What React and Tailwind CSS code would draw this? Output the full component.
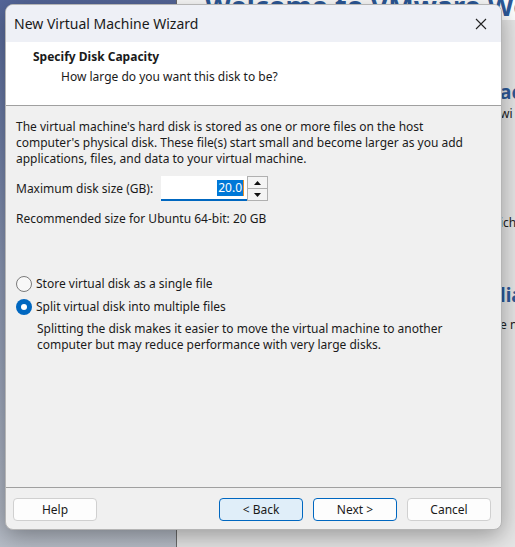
import React from "react";

const font = { fontFamily: '"Noto Sans", "Open Sans", sans-serif' };

function Radio({ checked, label }) {
  return (
    <div className="flex items-center gap-[4px] h-[23px]">
      {checked ? (
        <span className="w-[16px] h-[16px] rounded-full bg-[#0067c0] flex items-center justify-center">
          <span className="w-[6px] h-[6px] rounded-full bg-white" />
        </span>
      ) : (
        <span className="w-[16px] h-[16px] rounded-full border border-[#7a7a7a] bg-[#f8f8f8]" />
      )}
      <span>{label}</span>
    </div>
  );
}

function Button({ children, variant }) {
  const cls =
    variant === "hover"
      ? "bg-[#e0eef9] border-[#0067c0]"
      : variant === "default"
      ? "bg-[#fdfdfd] border-[#0067c0]"
      : "bg-[#fdfdfd] border-[#d0d0d0]";
  return (
    <button className={`w-[84px] h-[23px] rounded-[4px] border text-[12px] text-[#1a1a1a] flex items-center justify-center ${cls}`}>
      {children}
    </button>
  );
}

export default function App() {
  return (
    <div className="relative w-[515px] h-[547px] overflow-hidden flex" style={font}>
      {/* background: VMware library sidebar */}
      <div className="w-[176px] h-full bg-gradient-to-b from-[#55679a] via-[#8c98b4] to-[#b7bdc7]" />
      <div className="w-px h-full bg-[#6a6a6a]" />
      {/* background: VMware home page */}
      <div className="flex-1 h-full bg-[#dcdcdc] flex flex-col overflow-hidden">
        <div className="h-[20px] bg-white overflow-hidden">
          <div className="mt-[-8px] ml-[28px] text-[27px] leading-none font-bold text-[#2d5a99] whitespace-nowrap">
            Welcome to VMware Workstation
          </div>
        </div>
        <div className="flex-1 bg-[#e6e6e6] pl-[323px] text-[12px] text-[#222] whitespace-nowrap">
          <div className="mt-[60px] text-[19px] font-bold text-[#2d5a99] leading-[24px]">ac</div>
          <div className="mt-[2px] leading-[16px]">wi</div>
          <div className="mt-[93px] leading-[16px]">ich</div>
          <div className="mt-[52px] text-[19px] font-bold text-[#2d5a99] leading-[24px]">lia</div>
          <div className="mt-[10px] leading-[16px]">e n</div>
        </div>
      </div>

      {/* dialog window */}
      <div className="absolute left-[5px] top-[4px] w-[497px] h-[526px] rounded-[8px] border border-[#b5b5b5] bg-[#f0f0f0] shadow-[0_6px_24px_rgba(0,0,0,0.35)] overflow-hidden flex flex-col text-[12px] text-[#1a1a1a]">
        <div className="h-[37px] bg-[#eef0f6] flex items-center justify-between pl-[8px] pr-[14px]">
          <span className="text-[14px] text-[#1a1a1a]">New Virtual Machine Wizard</span>
          <svg width="12" height="12" viewBox="0 0 12 12">
            <path d="M1 1 L11 11 M11 1 L1 11" stroke="#222" strokeWidth="1.1" />
          </svg>
        </div>
        <div className="h-[64px] bg-white border-b border-[#a0a0a0] pl-[27px] pt-[7px]">
          <div className="font-bold leading-[16px]">Specify Disk Capacity</div>
          <div className="pl-[28px] mt-[4px] leading-[16px]">How large do you want this disk to be?</div>
        </div>
        <div className="flex-1 px-[10px] pt-[13px] leading-[16px]">
          <p>
            The virtual machine's hard disk is stored as one or more files on the host
            <br />
            computer's physical disk. These file(s) start small and become larger as you add
            <br />
            applications, files, and data to your virtual machine.
          </p>
          <div className="flex items-center mt-[9px]">
            <span className="w-[145px]">Maximum disk size (GB):</span>
            <div className="w-[86px] h-[25px] bg-white border-b-2 border-[#0067c0] flex items-center justify-end pr-[3px]">
              <span className="bg-[#0078d7] text-white px-[1px] leading-[16px]">20.0</span>
              <span className="w-px h-[16px] bg-[#e8912a]" />
            </div>
            <div className="w-[21px] h-[25px] border border-[#b0b0b0] bg-[#f4f4f4] flex flex-col">
              <div className="flex-1 border-b border-[#b0b0b0] flex items-center justify-center">
                <svg width="7" height="4" viewBox="0 0 7 4"><path d="M0 4 L3.5 0 L7 4 Z" fill="#111" /></svg>
              </div>
              <div className="flex-1 flex items-center justify-center">
                <svg width="7" height="4" viewBox="0 0 7 4"><path d="M0 0 L3.5 4 L7 0 Z" fill="#111" /></svg>
              </div>
            </div>
          </div>
          <p className="mt-[10px]">Recommended size for Ubuntu 64-bit: 20 GB</p>
          <div className="mt-[45px] flex flex-col">
            <Radio label="Store virtual disk as a single file" />
            <Radio checked label="Split virtual disk into multiple files" />
          </div>
          <p className="pl-[21px] mt-[3px]">
            Splitting the disk makes it easier to move the virtual machine to another
            <br />
            computer but may reduce performance with very large disks.
          </p>
        </div>
        <div className="border-t border-[#a0a0a0] h-[42px] flex items-start pt-[10px] pl-[7px] pr-[10px]">
          <Button>Help</Button>
          <div className="flex-1" />
          <div className="flex gap-[10px]">
            <Button variant="hover">&lt; Back</Button>
            <Button variant="default">Next &gt;</Button>
            <Button>Cancel</Button>
          </div>
        </div>
      </div>
    </div>
  );
}
